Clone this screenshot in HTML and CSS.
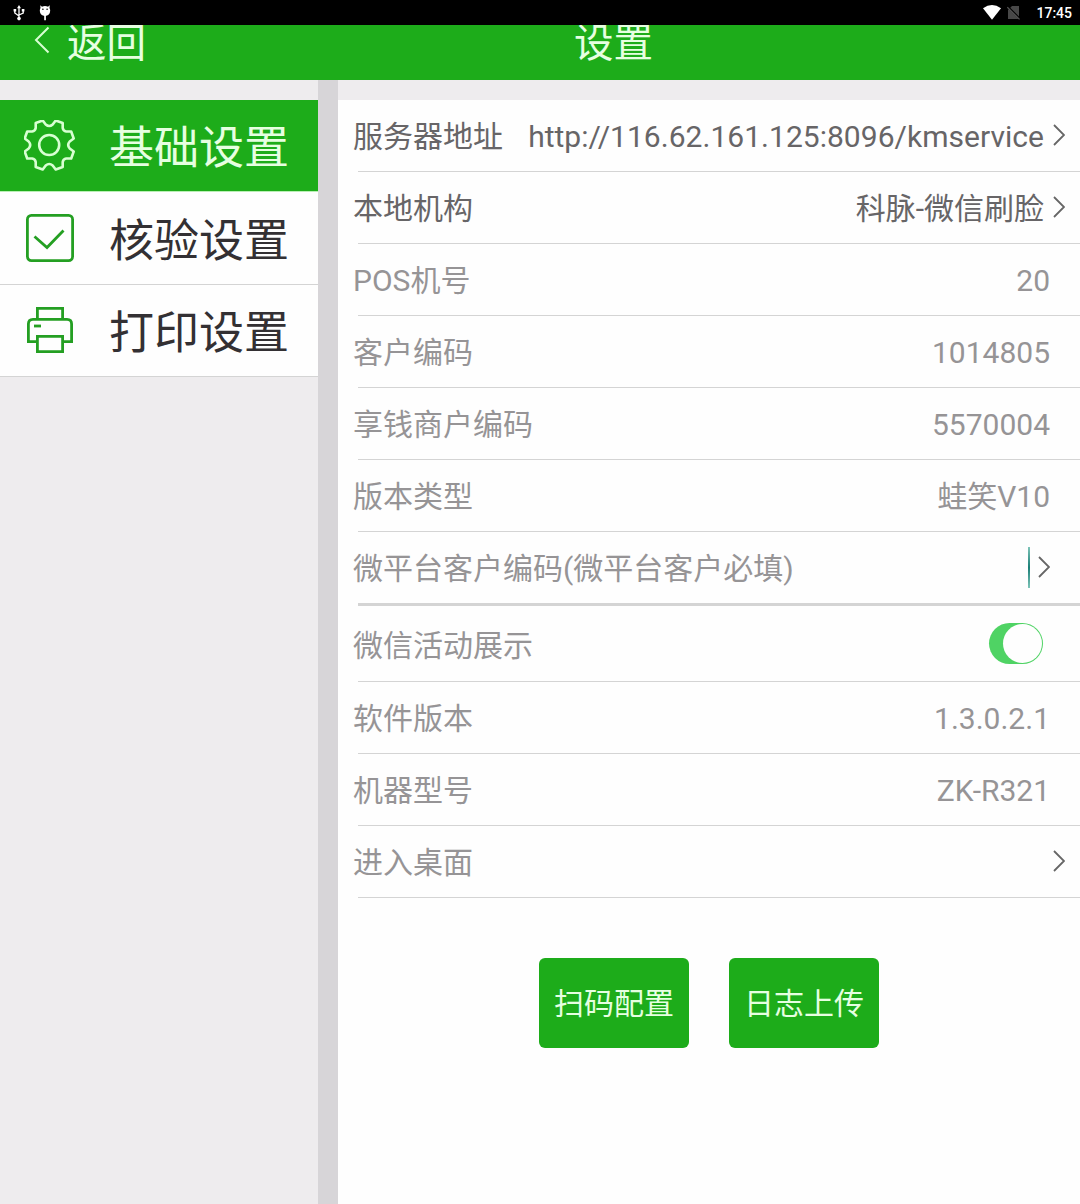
FILE: index.html
```html
<!DOCTYPE html>
<html lang="zh-CN">
<head>
<meta charset="utf-8">
<title>设置</title>
<link rel="stylesheet" href="styles.css">
</head>
<body>
<div class="statusbar">
  <div class="status-left">
    <svg class="usb" width="12" height="16" viewBox="0 0 12 16" fill="none" stroke="#fff" stroke-width="1.3"><path d="M6 3v10M1.8 5v3L6 11M10.2 5v3L6 10"/><path d="M6 0l2 3.2H4zM.6 4h2.6v2.4H.6zM8.8 4h2.6v2.4H8.8z" fill="#fff" stroke="none"/><circle cx="6" cy="13.6" r="1.8" fill="#fff" stroke="none"/></svg>
    <svg class="bug" width="12" height="16" viewBox="0 0 12 16" fill="#fff"><path d="M1.2.2l1.8 1.5Q6 .4 9 1.7L10.8.2 10.5 3q.7 1.200.7 2.800Q11 10.600 6 10.900 1 10.600.8 5.800.8 4.200 1.500 3z"/><path d="M5.200 10h1.700v5.200H5.200z"/><circle cx="3.900" cy="4.200" r=".8" fill="#000"/><circle cx="8.100" cy="4.200" r=".8" fill="#000"/></svg>
  </div>
  <div class="status-right">
    <svg class="wifi" width="18" height="15" viewBox="0 0 18 15"><path d="M0 3.300Q9-3.300 18 3.300L9 14.800z" fill="#fff"/></svg>
    <svg class="nosim" width="14" height="15" viewBox="0 0 14 15"><path d="M5 1h7v13H1V5z" fill="#484848"/><path d="M.3 1.300l12.500 12.500" stroke="#000" stroke-width="2"/><path d="M.3 2.200l12.200 12.200" stroke="#555" stroke-width="1.200"/></svg>
    <span class="clock">17:45</span>
  </div>
</div>
<header class="header">
  <div class="back">
    <svg width="16" height="28" viewBox="0 0 16 28" fill="none" stroke="#d8ffd2" stroke-width="2"><path d="M14.500 1.500L2 14l12.500 12.500"/></svg>
    <span>返回</span>
  </div>
  <h1 class="title">设置</h1>
</header>
<main class="main">
  <nav class="sidebar">
    <div class="nav-item active">
      <svg width="52" height="52" viewBox="0 0 52 52" fill="none" stroke="#d8ffd2" stroke-width="2.600" stroke-linejoin="round"><g transform="translate(-.8 -1)"><path d="M19.500 1.500L22.500 5.500Q26 8.500 29.500 5.500L32.500 1.500L39.500 4V9Q40 12 43 12.500H48L50.500 19.500L46.500 22.500Q43.500 26 46.500 29.500L50.500 32.500L48 39.500H43Q40 40 39.500 43V48L32.500 50.500L29.500 46.500Q26 43.500 22.500 46.500L19.500 50.500L12.500 48V43Q12 40 9 39.500H4L1.500 32.500L5.500 29.500Q8.500 26 5.500 22.500L1.500 19.500L4 12.500H9Q12 12 12.500 9V4z"/><circle cx="26" cy="26" r="10"/></g></svg>
      <span>基础设置</span>
    </div>
    <div class="nav-item">
      <svg width="52" height="52" viewBox="0 0 52 52" fill="none" stroke="#249f22" stroke-width="2.800"><rect x="3.400" y="3.400" width="45.200" height="45.200" rx="4"/><path d="M10.500 24.500l12.500 11L39.500 18.500"/></svg>
      <span>核验设置</span>
    </div>
    <div class="nav-item">
      <svg width="52" height="52" viewBox="0 0 52 52" fill="none" stroke="#249f22" stroke-width="2.800"><path d="M13.400 15V4.400h25.200V15M13 37.600H4.400V20q0-4.600 4.600-4.600h34q4.600 0 4.600 4.600v17.600H39M13.400 32.400h25.200v15.200H13.400z"/><path d="M10 22h7" /></svg>
      <span>打印设置</span>
    </div>
  </nav>
  <div class="divider"></div>
  <section class="content">
    <div class="list">
      <div class="row strong link"><span>服务器地址</span><span class="value url">http://116.62.161.125:8096/kmservice</span><svg class="chev" viewBox="0 0 12 22"><path d="M1 1l10 10L1 21"/></svg></div>
      <div class="row strong link"><span>本地机构</span><span class="value">科脉-微信刷脸</span><svg class="chev" viewBox="0 0 12 22"><path d="M1 1l10 10L1 21"/></svg></div>
      <div class="row"><span>POS机号</span><span class="value">20</span></div>
      <div class="row"><span>客户编码</span><span class="value">1014805</span></div>
      <div class="row"><span>享钱商户编码</span><span class="value">5570004</span></div>
      <div class="row"><span>版本类型</span><span class="value">蛙笑V10</span></div>
      <div class="row thick"><span>微平台客户编码(微平台客户必填)</span><i class="caret"></i><svg class="chev" viewBox="0 0 12 22"><path d="M1 1l10 10L1 21"/></svg></div>
      <div class="row tall"><span>微信活动展示</span><div class="switch"><div class="knob"></div></div></div>
      <div class="row"><span>软件版本</span><span class="value">1.3.0.2.1</span></div>
      <div class="row"><span>机器型号</span><span class="value">ZK-R321</span></div>
      <div class="row link"><span>进入桌面</span><svg class="chev alone" viewBox="0 0 12 22"><path d="M1 1l10 10L1 21"/></svg></div>
    </div>
    <div class="actions">
      <button class="btn">扫码配置</button>
      <button class="btn">日志上传</button>
    </div>
  </section>
</main>
</body>
</html>
```
FILE: styles.css
```css
* { box-sizing: border-box; }
body {
  margin: 0;
  height: 1204px;
  display: flex;
  flex-direction: column;
  overflow: hidden;
  background: #eeecee;
  font-family: Roboto, "Noto Sans CJK SC", sans-serif;
}
svg { display: block; flex: none; }
.statusbar {
  height: 25px;
  flex: none;
  display: flex;
  justify-content: space-between;
  background: #000;
  padding: 0 8px 0 13px;
  position: relative;
  z-index: 1;
}
.status-left { display: flex; gap: 14px; padding-top: 5px; }
.status-right { display: flex; padding-top: 5px; }
.nosim { margin: 0 15px 0 6px; }
.clock { color: #fff; font-size: 14px; font-weight: 500; line-height: 17px; }
.header {
  height: 80px;
  margin-top: -25px;
  flex: none;
  display: grid;
  grid-template-columns: 574px 1fr;
  align-items: center;
  background: #1dac1a;
  color: #e6ffe1;
  font-size: 39.500px;
  line-height: 72px;
}
.back { display: flex; align-items: center; gap: 17px; padding-left: 34px; }
.back span, .title { padding-top: 8px; }
.title { margin: 0; font-size: 39.500px; font-weight: 400; }
.main { flex: 1; display: flex; }
.sidebar { width: 318px; padding-top: 20px; }
.nav-item {
  height: 92.500px;
  display: flex;
  align-items: center;
  gap: 33px;
  padding-left: 24px;
  border-bottom: 1px solid #d4d4d4;
  background: #fefefe;
  color: #333033;
  font-size: 45px;
  line-height: 82px;
}
.nav-item span { padding-top: 8px; }
.nav-item.active {
  height: 92px;
  border-bottom: 1px solid #b9efb5;
  background: #1dac1a;
  color: #e6ffe1;
}
.nav-item.active span { padding-top: 7px; }
.divider { width: 20px; background: #d7d5d8; }
.content { flex: 1; margin-top: 20px; background: #fefefe; }
.list { padding-left: 15px; }
.row {
  height: 72px;
  display: flex;
  align-items: center;
  padding-right: 30px;
  color: #969496;
  font-size: 30px;
  line-height: 68px;
  background: linear-gradient(#d4d4d4, #d4d4d4) 5px 100% / 100% 1px no-repeat;
}
.row span { padding-top: 2px; }
.row.strong { color: #676567; }
.row.link { padding-right: 15px; }
.row.thick { height: 74px; padding-bottom: 2px; background-size: 100% 3px; }
.row.tall { height: 76px; padding-right: 37px; }
.row.tall span { padding-top: 3px; }
.value { margin-left: auto; white-space: nowrap; }
.url { letter-spacing: 0.030px; }
.chev {
  width: 12px;
  height: 22px;
  margin: 0 0 2px 9px;
  fill: none;
  stroke: #666;
  stroke-width: 1.800;
}
.chev.alone { margin-left: auto; }
.caret { width: 2px; height: 41px; margin: 0 0 2px auto; background: linear-gradient(#7dc4b8, #1b7f77, #7dc4b8); }
.thick .chev { margin-left: 8px; }
.switch { width: 54px; height: 41px; margin: 0 0 2px auto; padding: 1px; border-radius: 21px; background: #4fd364; display: flex; justify-content: flex-end; }
.knob { width: 39px; height: 39px; border-radius: 50%; background: #fefefe; }
.actions { display: flex; gap: 40px; padding: 60px 0 0 201px; }
.btn {
  width: 150px;
  height: 90px;
  padding: 2px 0 0;
  border: 0;
  border-radius: 6px;
  background: #1dac1a;
  color: #e6ffe1;
  font: 30px/88px Roboto, "Noto Sans CJK SC", sans-serif;
}
```
